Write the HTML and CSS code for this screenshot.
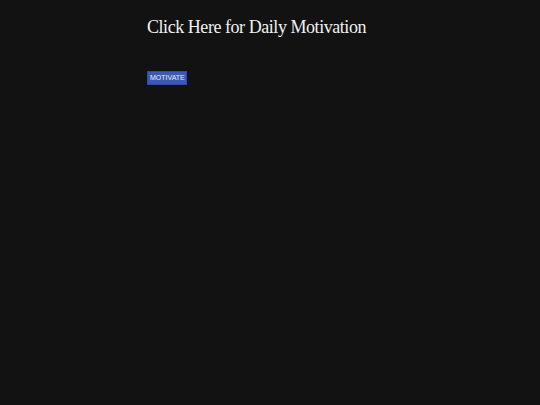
FILE: index.html
```html
<!DOCTYPE html>
<html>
<head>
<meta charset="utf-8">
<link rel="stylesheet" href="styles.css">
</head>
<body>
<main class="wrap">
  <h1 class="title">Click Here for Daily Motivation</h1>
  <button class="btn">MOTIVATE</button>
</main>
</body>
</html>
```
FILE: styles.css
```css
html, body {
  margin: 0;
  padding: 0;
  background: #121212;
  height: 100%;
}
.wrap {
  padding: 16px 0 0 147px;
  display: flex;
  flex-direction: column;
  align-items: flex-start;
}
.title {
  margin: 0;
  font-family: "Liberation Serif", serif;
  font-weight: normal;
  font-size: 18px;
  letter-spacing: -0.45px;
  color: #f0f0f0;
  line-height: 22px;
}
.btn {
  margin-top: 33px;
  background: #3a5ab3;
  color: #e8ecf8;
  border: 1px solid #2f4c9c;
  font-family: "Liberation Sans", sans-serif;
  font-size: 7px;
  padding: 0 2px;
  width: 40px;
  height: 14px;
  line-height: 12px;
}
```
